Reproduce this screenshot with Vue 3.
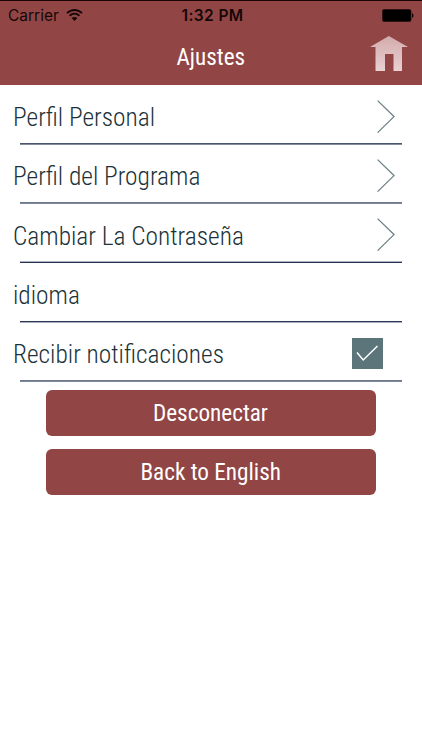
<template>
    <div class="settings_page">
        <header class="page_head">
            <div class="status_bar">
                <div class="status_left">
                    <span class="carrier">Carrier</span>
                    <svg class="wifi_icon" viewBox="0 0 17 12" width="17" height="12">
                        <path d="M1 4.2C5.3-.1 11.7-.1 16 4.2M3.6 6.8c2.9-2.7 6.9-2.7 9.8 0" fill="none" stroke="#160607" stroke-width="1.9" />
                        <path d="M5.6 9c1.8-1.5 4-1.5 5.8 0L8.5 12z" fill="#160607" />
                    </svg>
                </div>
                <span class="clock">1:32 PM</span>
                <div class="status_right">
                    <svg viewBox="0 0 32 13" width="32" height="13">
                        <rect x=".5" y=".5" width="28.5" height="12" rx="1.6" fill="#000" stroke="#2b1011" stroke-width=".8" />
                        <path d="M30 4.2c2 .5 2 4.1 0 4.6z" fill="#160607" />
                    </svg>
                </div>
            </div>
            <div class="title_bar">
                <h1 class="page_title"><span class="narrow">Ajustes</span></h1>
                <button type="button" class="home_btn" aria-label="Inicio">
                    <svg viewBox="0 0 39 36" width="39" height="36">
                        <defs>
                            <linearGradient id="homeFill" x1="0" y1="0" x2="0" y2="1">
                                <stop offset="0" stop-color="#d3abac" />
                                <stop offset="1" stop-color="#e8d1d2" />
                            </linearGradient>
                        </defs>
                        <path d="M18.8 0 38 11H32V35H23.5V18H15V35H5.5V11H0z" fill="url(#homeFill)" />
                    </svg>
                </button>
            </div>
        </header>

        <ul class="setting_list">
            <li v-for="row in rows" :key="row.label" class="setting_row">
                <span class="row_label narrow">{{ row.label }}</span>
                <svg v-if="row.type === 'link'" class="row_arrow" viewBox="0 0 18 34" width="18" height="34">
                    <path d="M.6.6 17 16.6 .6 32.6" fill="none" stroke="#6d8084" stroke-width="1.3" />
                </svg>
                <button v-if="row.type === 'check'" type="button" class="row_check" :aria-pressed="isNotified" @click="isNotified = !isNotified">
                    <svg v-if="isNotified" viewBox="0 0 31 31" width="31" height="31">
                        <path d="M5 14.5 11.2 22 25.500 8" fill="none" stroke="#fff" stroke-width="1.5" />
                    </svg>
                </button>
            </li>
        </ul>

        <div class="btn_area">
            <button v-for="label in buttons" :key="label" type="button" class="main_btn"><span class="narrow">{{ label }}</span></button>
        </div>
    </div>
</template>

<script setup>
import { ref } from "vue";

const isNotified = ref(true);

const rows = [
    { label: 'Perfil Personal', type: 'link' },
    { label: 'Perfil del Programa', type: 'link' },
    { label: 'Cambiar La Contraseña', type: 'link' },
    { label: 'idioma', type: 'text' },
    { label: 'Recibir notificaciones', type: 'check' },
];

const buttons = ['Desconectar', 'Back to English'];
</script>

<style>
body { background: #fff; }
</style>

<style scoped>
.settings_page { height: 750px; overflow: hidden; background: #fff; font-family: "Roboto Condensed", Roboto, sans-serif; font-stretch: 75%; }
button { padding: 0; border: none; background: none; font: inherit; cursor: pointer; }
svg { display: block; }
.narrow { display: inline-block; white-space: nowrap; }

/* header */
.page_head { height: 85px; background: #914645; border-top: 1px solid #1c0405; box-sizing: border-box; }
.status_bar { height: 28px; padding: 0 8px; display: grid; grid-template-columns: 1fr auto 1fr; align-items: center; color: #160607; font-family: Inter, sans-serif; font-size: 15.5px; font-stretch: normal; }
.status_left { display: flex; align-items: center; gap: 7px; }
.status_right { display: flex; justify-content: flex-end; }
.clock { padding-left: 3px; font-weight: 600; letter-spacing: 0.4px; }
.title_bar { height: 56px; padding: 0 13px 0 14px; display: grid; grid-template-columns: 1fr auto 1fr; align-items: center; }
.page_title { grid-column: 2; margin: 0 1px 0 -1px; color: #fff; font-size: 23.5px; font-weight: 400; }
.page_title .narrow { transform: scaleX(0.985); }
.home_btn { justify-self: end; margin-top: -7px; }

/* list */
.setting_list { margin: 0; padding: 0; list-style: none; display: grid; grid-template-rows: 60px 59px 59px 60px 59px; }
.setting_row { --line-top: #6f788d; --line-bottom: #7d869a; padding: 0 26px 0 13px; display: flex; align-items: center; justify-content: space-between; background: linear-gradient(var(--line-top) 50%, var(--line-bottom) 50%) 20px 100% / 382px 2px no-repeat; }
.setting_row:nth-child(1) { --line-top: #49556e; --line-bottom: #838b9c; }
.setting_row:nth-child(3) { --line-top: #adb2bf; --line-bottom: #26324f; }
.setting_row:nth-child(4) { --line-top: #2b3753; --line-bottom: #a9afbc; }
.row_label { padding-top: 4px; color: #203239; font-size: 26px; font-weight: 300; transform: scaleX(0.976); transform-origin: 0 50%; }
.setting_row:nth-child(2) .row_label,
.setting_row:nth-child(5) .row_label { padding-top: 3px; }
.row_arrow { margin: 3px 1px 0 0; }
.row_check { width: 31px; height: 31px; margin: 2px 13px 0 0; background: #5b757b; }

/* buttons */
.btn_area { padding: 8px 46px 0; display: flex; flex-direction: column; gap: 13px; }
.main_btn { height: 46px; border-radius: 6px; background: #914645; color: #fff; font-size: 24px; }
.main_btn .narrow { margin-left: -1px; transform: scaleX(0.967); }
</style>
